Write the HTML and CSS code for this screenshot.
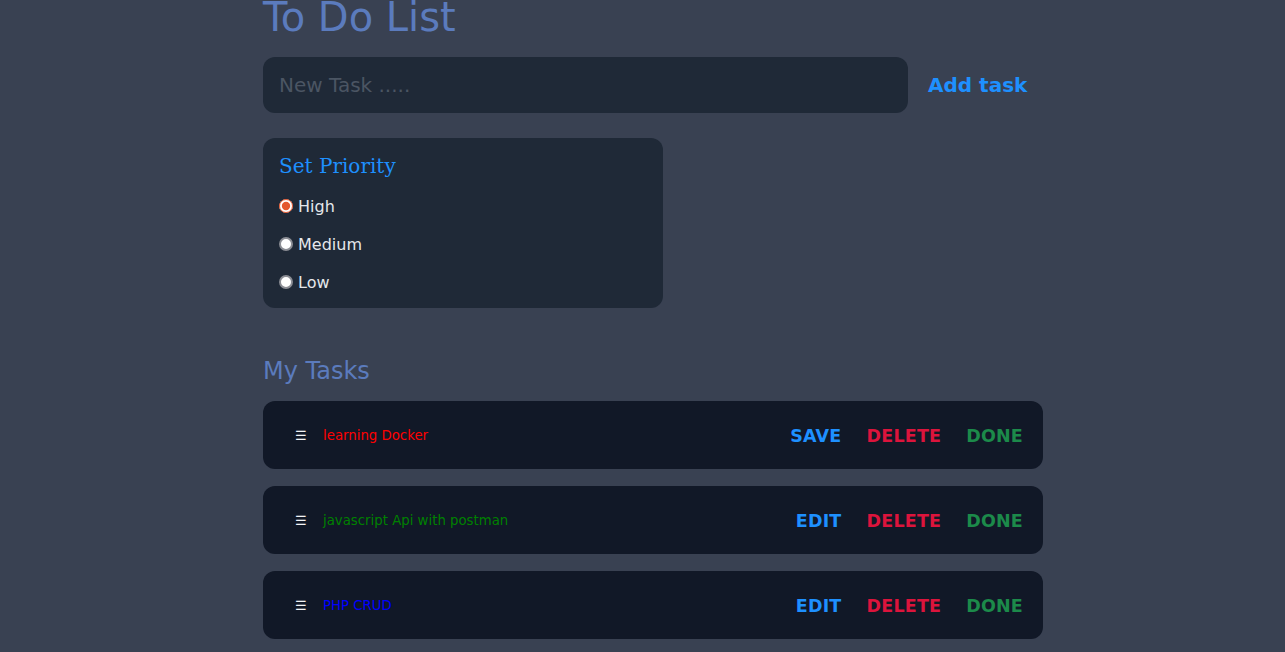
FILE: index.html
```html
<!DOCTYPE html>
<html lang="en">
<head>
<meta charset="utf-8">
<title>To Do List</title>
<link rel="stylesheet" href="styles.css">
</head>
<body>
<div class="app">
  <h1 class="title">To Do List</h1>
  <div class="add-row">
    <input class="task-input" type="text" placeholder="New Task .....">
    <button class="add-btn">Add task</button>
  </div>
  <div class="priority">
    <h3 class="priority-title">Set Priority</h3>
    <label class="opt"><input type="radio" name="p" checked> High</label>
    <label class="opt"><input type="radio" name="p"> Medium</label>
    <label class="opt"><input type="radio" name="p"> Low</label>
  </div>
  <h2 class="tasks-title">My Tasks</h2>
  <ul class="tasks">
    <li class="task">
      <span class="handle">☰</span>
      <span class="task-text red">learning Docker</span>
      <div class="actions">
        <button class="act blue">SAVE</button>
        <button class="act crimson">DELETE</button>
        <button class="act green">DONE</button>
      </div>
    </li>
    <li class="task">
      <span class="handle">☰</span>
      <span class="task-text dgreen">javascript Api with postman</span>
      <div class="actions">
        <button class="act blue">EDIT</button>
        <button class="act crimson">DELETE</button>
        <button class="act green">DONE</button>
      </div>
    </li>
    <li class="task">
      <span class="handle">☰</span>
      <span class="task-text pblue">PHP CRUD</span>
      <div class="actions">
        <button class="act blue">EDIT</button>
        <button class="act crimson">DELETE</button>
        <button class="act green">DONE</button>
      </div>
    </li>
  </ul>
</div>
</body>
</html>
```

FILE: styles.css
```css
html, body {
  margin: 0;
  padding: 0;
  background: #394152;
  height: 100%;
  overflow: hidden;
}
body {
  font-family: "DejaVu Sans", sans-serif;
}
.app {
  width: 780px;
  margin-left: 263px;
}
.title {
  margin: -3px 0 0 0;
  font-size: 40px;
  line-height: 40px;
  font-weight: normal;
  color: #5b7bbd;
}
.add-row {
  display: flex;
  align-items: center;
  margin-top: 20px;
}
.task-input {
  width: 645px;
  flex-shrink: 0;
  height: 56px;
  box-sizing: border-box;
  border: none;
  outline: none;
  border-radius: 12px;
  background: #1f2937;
  padding: 0 16px;
  font-family: "DejaVu Sans", sans-serif;
  font-size: 20px;
  color: #e5e7eb;
}
.task-input::placeholder {
  color: #4b5563;
}
.add-btn {
  background: none;
  border: none;
  white-space: nowrap;
  flex-shrink: 0;
  padding: 0 16px 0 20px;
  font-family: "DejaVu Sans", sans-serif;
  font-weight: bold;
  font-size: 20px;
  color: #1e90ff;
}
.priority {
  margin-top: 25px;
  width: 400px;
  height: 170px;
  box-sizing: border-box;
  background: #1f2937;
  border-radius: 12px;
  padding: 14px 16px;
  display: flex;
  flex-direction: column;
}
.priority-title {
  margin: 0 0 7px 0;
  font-family: "DejaVu Serif", serif;
  font-weight: normal;
  font-size: 20px;
  line-height: 28px;
  color: #1e90ff;
  flex-shrink: 0;
}
.opt {
  display: flex;
  align-items: center;
  height: 38px;
  flex-shrink: 0;
  font-size: 16px;
  color: #e5e7eb;
  gap: 5px;
}
.opt input {
  margin: 0;
  width: 14px;
  height: 14px;
  accent-color: #e4572e;
}
.opt input:not(:checked) {
  appearance: none;
  -webkit-appearance: none;
  box-sizing: border-box;
  border-radius: 50%;
  background: #ffffff;
  border: 2px solid #8b8d94;
}
.tasks-title {
  margin: 48px 0 0 0;
  font-size: 24px;
  line-height: 30px;
  font-weight: normal;
  color: #5b7bbd;
}
.tasks {
  list-style: none;
  margin: 15px 0 0 0;
  padding: 0;
  display: flex;
  flex-direction: column;
  gap: 17px;
}
.task {
  display: flex;
  align-items: center;
  height: 68px;
  flex-shrink: 0;
  background: #111827;
  border-radius: 12px;
  padding: 1px 20px 0 32px;
  box-sizing: border-box;
}
.handle {
  color: #f3f4f6;
  font-size: 13px;
  width: 28px;
}
.task-text {
  font-size: 13.3px;
  flex: 1;
}
.red { color: #ff0000; }
.dgreen { color: #008000; }
.pblue { color: #0000ff; }
.actions {
  display: flex;
  gap: 25px;
}
.act {
  background: none;
  border: none;
  padding: 0;
  font-family: "DejaVu Sans", sans-serif;
  font-weight: bold;
  font-size: 17.5px;
  letter-spacing: 0.2px;
}
.blue { color: #1e90ff; }
.crimson { color: #dc143c; }
.green { color: #1c8a4a; }
```
